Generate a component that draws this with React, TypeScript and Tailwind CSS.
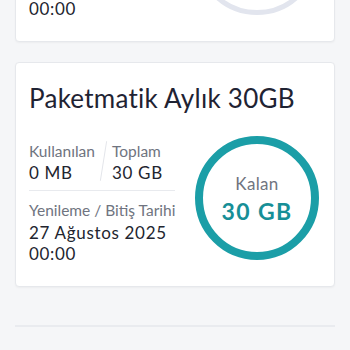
import React from 'react';

interface Pkg {
  title: string;
  used: string;
  total: string;
  remaining: string;
  renewal: string;
  time: string;
  active: boolean;
}

const packages: Pkg[] = [
  { title: 'Paketmatik Aylık 10GB', used: '0 MB', total: '10 GB', remaining: '10 GB', renewal: '27 Ağustos 2025', time: '00:00', active: false },
  { title: 'Paketmatik Aylık 30GB', used: '0 MB', total: '30 GB', remaining: '30 GB', renewal: '27 Ağustos 2025', time: '00:00', active: true },
];

function Ring({ active, remaining }: { active: boolean; remaining: string }) {
  return (
    <div className="relative w-[124px] h-[124px] shrink-0">
      <svg width="124" height="124" viewBox="0 0 124 124" className="absolute inset-0">
        <circle
          cx="62"
          cy="62"
          r={active ? 58 : 59.5}
          fill="none"
          stroke={active ? '#1b9ea7' : '#e2e5ee'}
          strokeWidth={active ? 8 : 5}
        />
      </svg>
      <div className="absolute inset-0 flex flex-col items-center pt-[38px]">
        <span className="text-[17px] leading-[20px] tracking-[0.02em] text-[#6f7480]">Kalan</span>
        <span className="mt-[5px] text-[23px] leading-[24px] font-bold tracking-[0.06em] text-[#178f97]">{remaining}</span>
      </div>
    </div>
  );
}

function PackageCard({ pkg }: { pkg: Pkg }) {
  return (
    <div className="h-[225px] bg-white rounded-[4px] border border-[#e6e8ec] shadow-[0_1px_2px_rgba(0,0,0,0.04)] pl-[13px] pr-[15px] pt-[20px]">
      <h2 className="text-[26px] leading-[30px] tracking-[0.01em] text-[#1f2333] whitespace-nowrap">{pkg.title}</h2>
      <div className="mt-[29px] flex items-start justify-between">
        <div className="w-[146px]">
          <div className="flex border-b border-[#e8eaee] pb-[7px]">
            <div className="w-[78px]">
              <div className="text-[15.5px] leading-[18px] text-[#6f7480]">Kullanılan</div>
              <div className="mt-[3px] text-[17px] leading-[20px] tracking-[0.04em] text-[#22252f]">{pkg.used}</div>
            </div>
            <div className="relative pl-[5px]">
              <span className="absolute left-[-4px] top-[-1px] h-[40px] w-px bg-[#e3e5ea] rotate-[9deg]" />
              <div className="text-[15.5px] leading-[18px] text-[#6f7480]">Toplam</div>
              <div className="mt-[3px] text-[17px] leading-[20px] tracking-[0.04em] text-[#22252f] whitespace-nowrap">{pkg.total}</div>
            </div>
          </div>
          <div className="mt-[10px] text-[15.5px] leading-[18px] text-[#6f7480] whitespace-nowrap">Yenileme / Bitiş Tarihi</div>
          <div className="mt-[3px] text-[17px] leading-[21px] tracking-[0.04em] text-[#22252f] whitespace-nowrap">{pkg.renewal}</div>
          <div className="text-[17px] leading-[21px] tracking-[0.04em] text-[#22252f]">{pkg.time}</div>
        </div>
        <div className="mt-[-6px]">
          <Ring active={pkg.active} remaining={pkg.remaining} />
        </div>
      </div>
    </div>
  );
}

export default function App() {
  return (
    <div className="w-[350px] h-[350px] overflow-hidden bg-[#f5f6f8]" style={{ fontFamily: 'Lato, "Open Sans", sans-serif' }}>
      <div className="mt-[-183px] px-[15px]">
        <div className="flex flex-col gap-[20px]">
          {packages.map(p => (
            <PackageCard key={p.title} pkg={p} />
          ))}
        </div>
        <div className="mt-[38px] h-[2px] bg-[#e9ebef]" />
      </div>
    </div>
  );
}
